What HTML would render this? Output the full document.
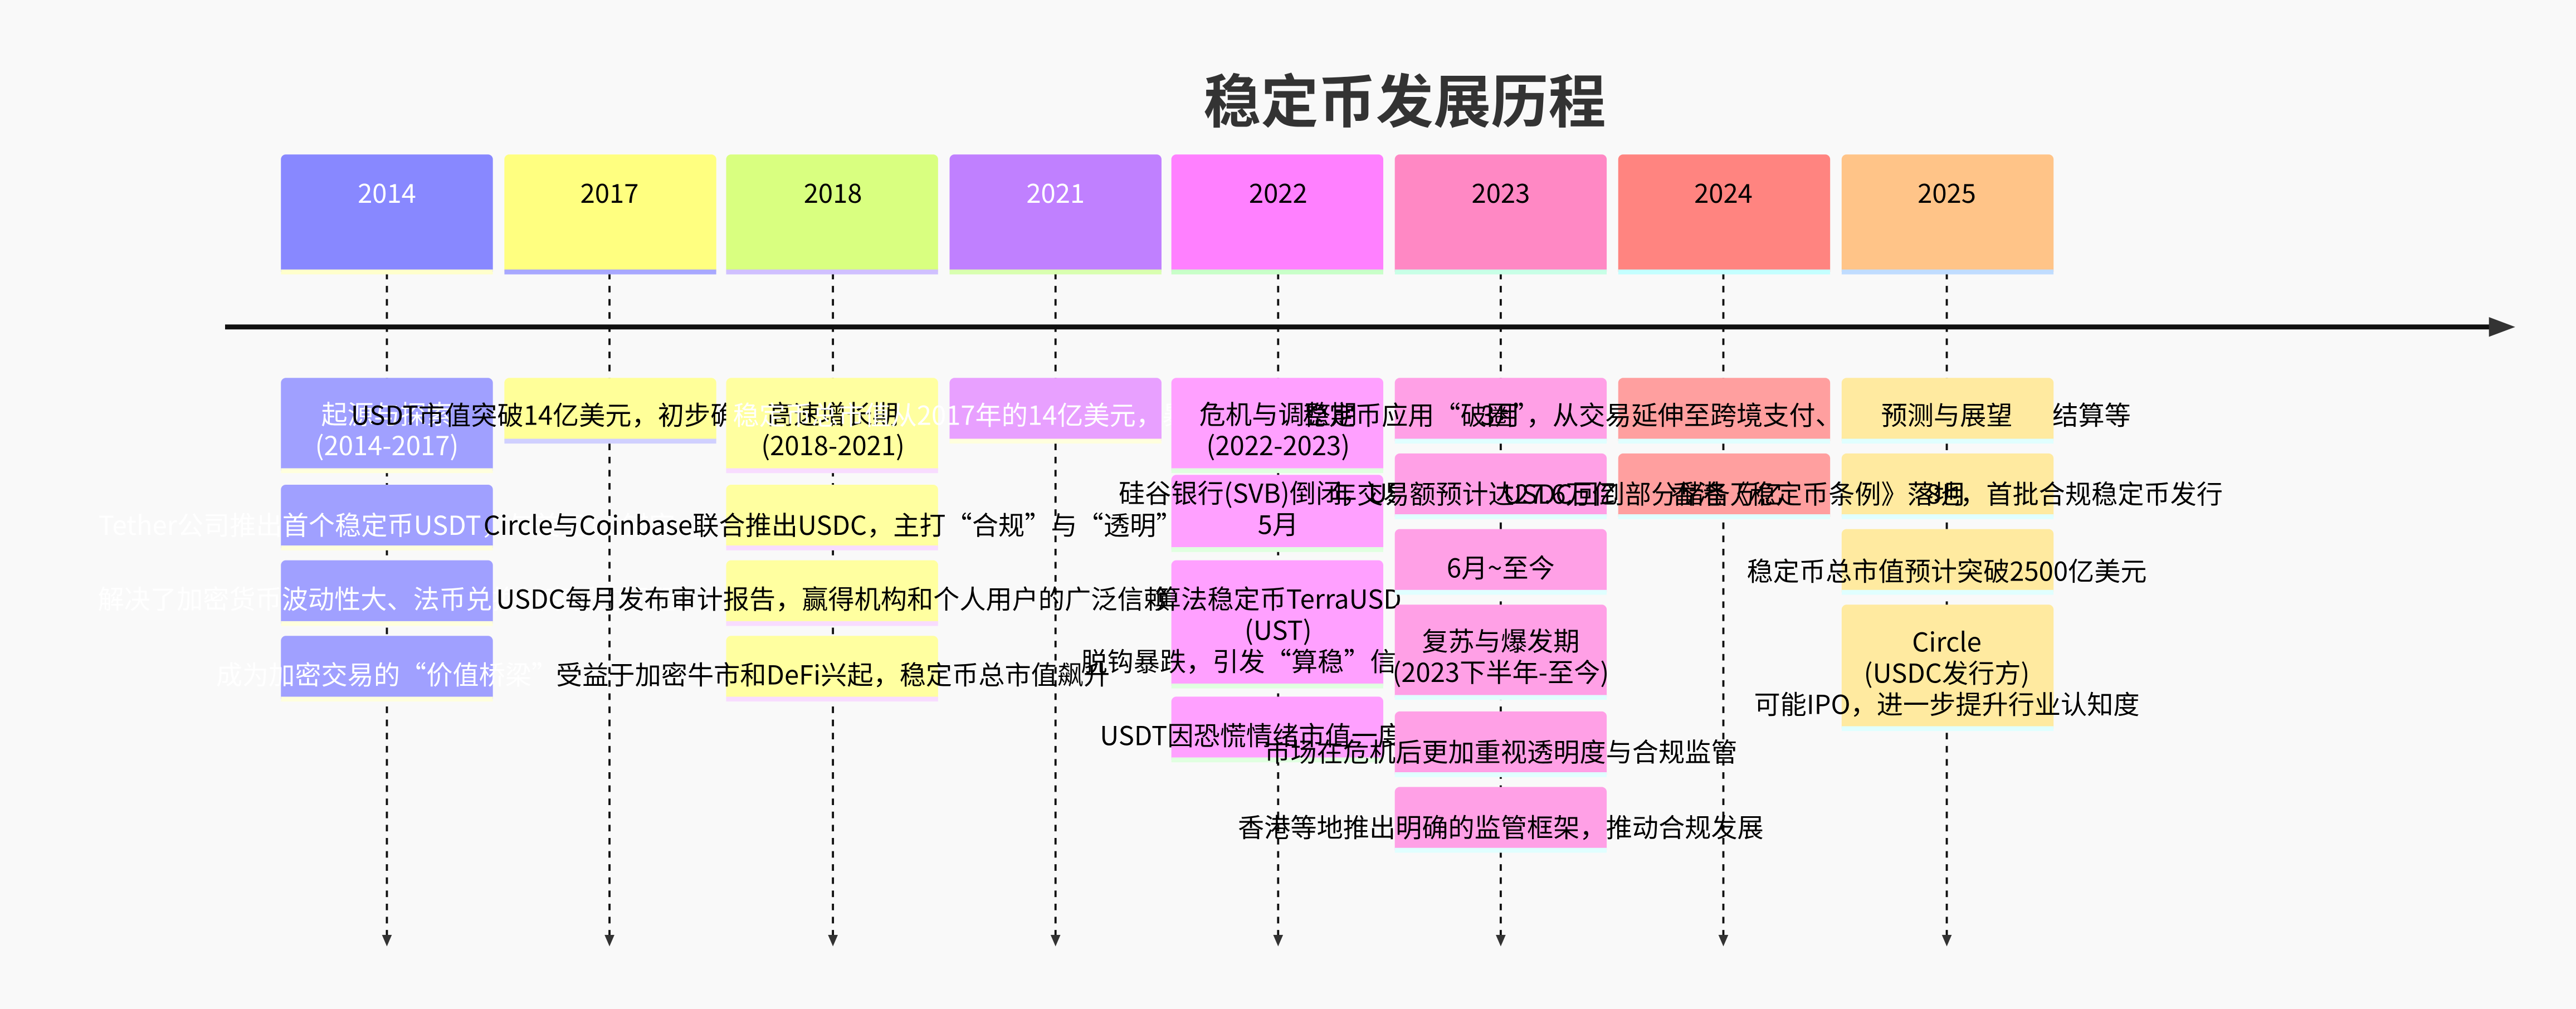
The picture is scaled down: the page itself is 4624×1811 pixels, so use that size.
<!DOCTYPE html>
<html><head><meta charset="utf-8">
<style>
html,body{margin:0;padding:0;}
body{width:4624px;height:1810px;overflow:hidden;background:#f9f9f9;}
#w{position:absolute;left:0;top:0;width:1568px;height:614px;transform:scale(2.94898);transform-origin:0 0;
font-family:"Liberation Sans Narrow","Noto Sans CJK SC","WenQuanYi Zen Hei",sans-serif;}
.b{position:absolute;width:129px;border-radius:3px 3px 0 0;box-sizing:border-box;border-bottom:3px solid #fff;}
.t{position:absolute;transform:translate(-50%,-50%);white-space:nowrap;text-align:center;font-size:16px;line-height:19px;color:#000;}
.w{color:#fff;}
.title{position:absolute;left:855px;top:60px;transform:translate(-50%,-50%);font-size:35px;font-weight:bold;color:#333;font-family:"Noto Sans CJK SC",sans-serif;white-space:nowrap;}
</style></head><body>
<div id="w">
<svg width="1568" height="614" style="position:absolute;left:0;top:0">
<line x1="137" y1="199" x2="1518" y2="199" stroke="#111" stroke-width="3"/>
<polygon points="1515,193 1531,199 1515,205" fill="#333"/>
<g stroke="#111" stroke-width="1.3" stroke-dasharray="4,4">
<line x1="235.5" y1="166" x2="235.5" y2="570"/>
<line x1="371" y1="166" x2="371" y2="570"/>
<line x1="507" y1="166" x2="507" y2="570"/>
<line x1="642.5" y1="166" x2="642.5" y2="570"/>
<line x1="778" y1="166" x2="778" y2="570"/>
<line x1="913.5" y1="166" x2="913.5" y2="570"/>
<line x1="1049" y1="166" x2="1049" y2="570"/>
<line x1="1185" y1="166" x2="1185" y2="570"/>
</g>
<g fill="#333">
<polygon points="232.5,569 238.5,569 235.5,576"/>
<polygon points="368,569 374,569 371,576"/>
<polygon points="504,569 510,569 507,576"/>
<polygon points="639.5,569 645.5,569 642.5,576"/>
<polygon points="775,569 781,569 778,576"/>
<polygon points="910.5,569 916.5,569 913.5,576"/>
<polygon points="1046,569 1052,569 1049,576"/>
<polygon points="1182,569 1188,569 1185,576"/>
</g>
</svg>
<div class="title">稳定币发展历程</div>

<div class="b" style="left:171px;top:94px;height:73px;background:#8888ff;border-color:#ffffcc"></div>
<div class="t w" style="left:235.5px;top:117px">2014</div>
<div class="b" style="left:307px;top:94px;height:73px;background:#ffff80;border-color:#a8a8ff"></div>
<div class="t" style="left:371px;top:117px">2017</div>
<div class="b" style="left:442px;top:94px;height:73px;background:#d9ff80;border-color:#d0c0ff"></div>
<div class="t" style="left:507px;top:117px">2018</div>
<div class="b" style="left:578px;top:94px;height:73px;background:#c080ff;border-color:#d9ffb0"></div>
<div class="t w" style="left:642.5px;top:117px">2021</div>
<div class="b" style="left:713px;top:94px;height:73px;background:#ff80ff;border-color:#c8ffc8"></div>
<div class="t" style="left:778px;top:117px">2022</div>
<div class="b" style="left:849px;top:94px;height:73px;background:#ff88c4;border-color:#c8ffe6"></div>
<div class="t" style="left:913.5px;top:117px">2023</div>
<div class="b" style="left:985px;top:94px;height:73px;background:#ff8480;border-color:#c4ffff"></div>
<div class="t" style="left:1049px;top:117px">2024</div>
<div class="b" style="left:1121px;top:94px;height:73px;background:#ffc488;border-color:#c0dcff"></div>
<div class="t" style="left:1185px;top:117px">2025</div>

<div class="b" style="left:171px;top:230px;height:58px;background:#a0a0ff;border-color:#ffffdd"></div>
<div class="t w" style="left:235.5px;top:261px">起源与探索<br>(2014-2017)</div>
<div class="b" style="left:171px;top:295px;height:40px;background:#a0a0ff;border-color:#ffffdd"></div>
<div class="t w" style="left:235.5px;top:319px">Tether公司推出首个稳定币USDT，与美元1:1锚定</div>
<div class="b" style="left:171px;top:341px;height:40px;background:#a0a0ff;border-color:#ffffdd"></div>
<div class="t w" style="left:235.5px;top:364px">解决了加密货币波动性大、法币兑换效率低的问题</div>
<div class="b" style="left:171px;top:387px;height:40px;background:#a0a0ff;border-color:#ffffdd"></div>
<div class="t w" style="left:235.5px;top:410px">成为加密交易的“价值桥梁”</div>

<div class="b" style="left:307px;top:230px;height:40px;background:#ffff99;border-color:#d0d0ff"></div>
<div class="t" style="left:371px;top:252px">USDT市值突破14亿美元，初步确立市场地位</div>

<div class="b" style="left:442px;top:230px;height:58px;background:#ffffa0;border-color:#f8dcff"></div>
<div class="t" style="left:507px;top:261px">高速增长期<br>(2018-2021)</div>
<div class="b" style="left:442px;top:295px;height:40px;background:#ffffa0;border-color:#f8dcff"></div>
<div class="t" style="left:507px;top:319px">Circle与Coinbase联合推出USDC，主打“合规”与“透明”</div>
<div class="b" style="left:442px;top:341px;height:40px;background:#ffffa0;border-color:#f8dcff"></div>
<div class="t" style="left:507px;top:364px">USDC每月发布审计报告，赢得机构和个人用户的广泛信赖</div>
<div class="b" style="left:442px;top:387px;height:40px;background:#ffffa0;border-color:#f8dcff"></div>
<div class="t" style="left:507px;top:410px">受益于加密牛市和DeFi兴起，稳定币总市值飙升</div>

<div class="b" style="left:578px;top:230px;height:40px;background:#e8a0ff;border-color:#ffffdd"></div>
<div class="t w" style="left:642.5px;top:252px">稳定币总市值从2017年的14亿美元，暴涨至1500亿美元</div>

<div class="b" style="left:713px;top:230px;height:58px;background:#ffa0ff;border-color:#e0ffe0"></div>
<div class="t" style="left:778px;top:261px">危机与调整期<br>(2022-2023)</div>
<div class="b" style="left:713px;top:289px;height:47px;background:#ffa0ff;border-color:#e0ffe0"></div>
<div class="t" style="left:778px;top:309px">硅谷银行(SVB)倒闭，USDC<br>5月</div>
<div class="b" style="left:713px;top:341px;height:78px;background:#ffa0ff;border-color:#e0ffe0"></div>
<div class="t" style="left:778px;top:383px">算法稳定币TerraUSD<br>(UST)<br>脱钩暴跌，引发“算稳”信任危机</div>
<div class="b" style="left:713px;top:424px;height:40px;background:#ffa0ff;border-color:#e0ffe0"></div>
<div class="t" style="left:778px;top:447px">USDT因恐慌情绪市值一度下滑</div>

<div class="b" style="left:849px;top:230px;height:40px;background:#ffa0e6;border-color:#e0ffff"></div>
<div class="t" style="left:913.5px;top:252px">3月</div>
<div class="b" style="left:849px;top:276px;height:40px;background:#ffa0e6;border-color:#e0ffff"></div>
<div class="t" style="left:913.5px;top:300px">年交易额预计达27.6万亿美元</div>
<div class="b" style="left:849px;top:322px;height:40px;background:#ffa0e6;border-color:#e0ffff"></div>
<div class="t" style="left:913.5px;top:345px">6月~至今</div>
<div class="b" style="left:849px;top:368px;height:58px;background:#ffa0e6;border-color:#e0ffff"></div>
<div class="t" style="left:913.5px;top:399px">复苏与爆发期<br>(2023下半年-至今)</div>
<div class="b" style="left:849px;top:433px;height:40px;background:#ffa0e6;border-color:#e0ffff"></div>
<div class="t" style="left:913.5px;top:457px">市场在危机后更加重视透明度与合规监管</div>
<div class="b" style="left:849px;top:479px;height:40px;background:#ffa0e6;border-color:#e0ffff"></div>
<div class="t" style="left:913.5px;top:503px">香港等地推出明确的监管框架，推动合规发展</div>

<div class="b" style="left:985px;top:230px;height:40px;background:#ff9f9f;border-color:#e0ffff"></div>
<div class="t" style="left:1045px;top:252px">稳定币应用“破圈”，从交易延伸至跨境支付、跨境电商、供应链结算等</div>
<div class="b" style="left:985px;top:276px;height:40px;background:#ff9f9f;border-color:#e0ffff"></div>
<div class="t" style="left:1000px;top:300px">USDC回到部分储备万亿</div>

<div class="b" style="left:1121px;top:230px;height:40px;background:#ffeaa0;border-color:#e0ffff"></div>
<div class="t" style="left:1185px;top:252px">预测与展望</div>
<div class="b" style="left:1121px;top:276px;height:40px;background:#ffeaa0;border-color:#e0ffff"></div>
<div class="t" style="left:1185px;top:300px">香港《稳定币条例》落地，首批合规稳定币发行</div>
<div class="t" style="left:1185px;top:300px">8月</div>
<div class="b" style="left:1121px;top:322px;height:40px;background:#ffeaa0;border-color:#e0ffff"></div>
<div class="t" style="left:1185px;top:347px">稳定币总市值预计突破2500亿美元</div>
<div class="b" style="left:1121px;top:368px;height:77px;background:#ffeaa0;border-color:#e0ffff"></div>
<div class="t" style="left:1185px;top:409px">Circle<br>(USDC发行方)<br>可能IPO，进一步提升行业认知度</div>
</div>
</body></html>
